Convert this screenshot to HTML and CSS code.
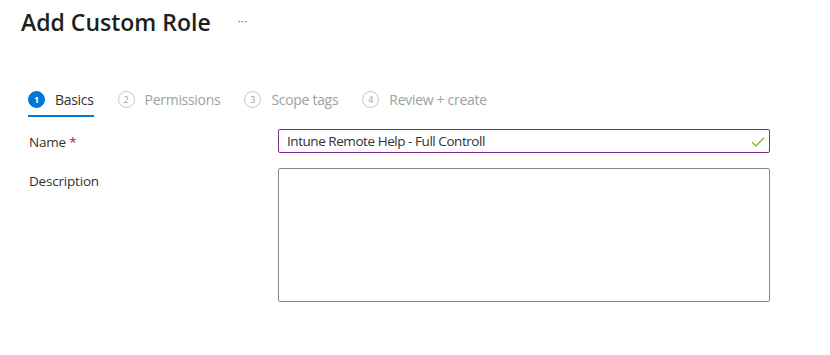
FILE: index.html
```html
<!DOCTYPE html>
<html lang="en">
<head>
    <meta charset="UTF-8">
    <title>Add Custom Role</title>
    <link rel="stylesheet" href="styles.css">
</head>
<body>
    <div class="blade">
        <div class="blade-header">
            <h1>Add Custom Role</h1>
            <span class="more">&middot;&middot;&middot;</span>
        </div>

        <div class="wizard-tabs">
            <div class="tab active">
                <span class="step">1</span>
                <span class="tab-label">Basics</span>
            </div>
            <div class="tab">
                <span class="step">2</span>
                <span class="tab-label">Permissions</span>
            </div>
            <div class="tab">
                <span class="step">3</span>
                <span class="tab-label">Scope tags</span>
            </div>
            <div class="tab">
                <span class="step">4</span>
                <span class="tab-label">Review + create</span>
            </div>
        </div>

        <form class="role-form">
            <div class="form-row">
                <label for="name">Name <span class="required">*</span></label>
                <div class="input-wrap">
                    <input type="text" id="name" value="Intune Remote Help - Full Controll">
                    <svg class="valid-icon" width="14" height="10" viewBox="0 0 14 10">
                        <path d="M1 5.2 L4.8 9 L13 1" fill="none" stroke="#6bb700" stroke-width="1.2"/>
                    </svg>
                </div>
            </div>
            <div class="form-row">
                <label for="description">Description</label>
                <textarea id="description"></textarea>
            </div>
        </form>
    </div>
</body>
</html>
```

FILE: styles.css
```css
* {
    margin: 0;
    padding: 0;
    box-sizing: border-box;
}

body {
    font-family: 'Open Sans', 'Noto Sans', sans-serif;
    background-color: #ffffff;
    color: #323130;
}

.blade {
    width: 830px;
    height: 355px;
    padding: 6px 0 0 21px;
}

.blade-header {
    display: flex;
    align-items: center;
    height: 32px;
}

h1 {
    font-size: 23px;
    font-weight: 600;
    color: #201f1e;
    letter-spacing: 0;
}

.more {
    margin-left: 27px;
    font-size: 11px;
    color: #605e5c;
    letter-spacing: 0.5px;
    padding-bottom: 4px;
}

.wizard-tabs {
    display: flex;
    gap: 24px;
    margin: 52px 0 0 7px;
}

.tab {
    display: flex;
    align-items: center;
    gap: 10px;
    padding-bottom: 6px;
    border-bottom: 2px solid transparent;
    color: #a19f9d;
    font-size: 14px;
    letter-spacing: -0.3px;
}

.tab.active {
    color: #323130;
    border-bottom-color: #0078d4;
}

.step {
    display: flex;
    justify-content: center;
    align-items: center;
    width: 17px;
    height: 17px;
    border: 1px solid #c8c6c4;
    border-radius: 50%;
    font-size: 9px;
    color: #a19f9d;
    letter-spacing: 0;
}

.tab.active .step {
    background-color: #0078d4;
    border-color: #0078d4;
    color: #ffffff;
    font-weight: 700;
}

.role-form {
    margin-top: 12px;
    padding-left: 8px;
}

.form-row {
    display: grid;
    grid-template-columns: 249px 492px;
    margin-bottom: 15px;
}

.form-row label {
    padding-top: 2px;
    font-size: 13.5px;
    line-height: 22px;
    color: #323130;
    letter-spacing: -0.2px;
}

.required {
    color: #a4262c;
}

.input-wrap {
    position: relative;
}

.input-wrap input {
    width: 100%;
    height: 24px;
    padding: 0 28px 0 8px;
    border: 1px solid #7e2d95;
    border-radius: 2px;
    font-family: inherit;
    font-size: 13.5px;
    color: #323130;
    letter-spacing: -0.45px;
    outline: none;
}

.valid-icon {
    position: absolute;
    right: 5px;
    top: 8px;
}

textarea {
    width: 100%;
    height: 134px;
    border: 1px solid #8a8886;
    border-radius: 2px;
    font-family: inherit;
    resize: none;
    outline: none;
}
```
